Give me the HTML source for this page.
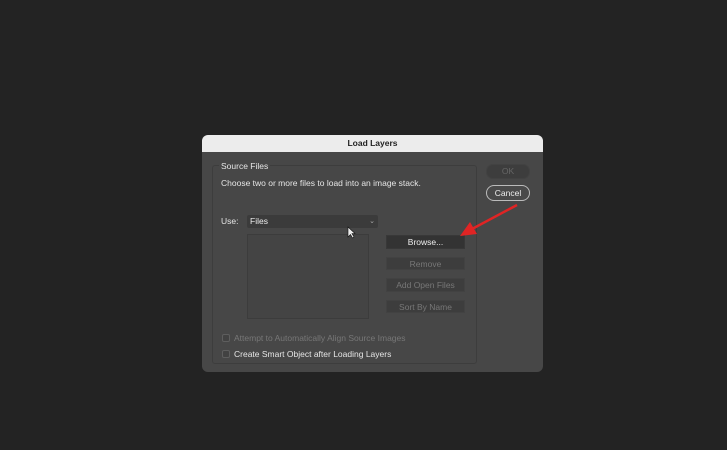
<!DOCTYPE html><html><head><style>
body{margin:0;width:727px;height:450px;background:#232323;position:relative;overflow:hidden;font-family:"Liberation Sans",sans-serif;font-size:8.5px;}
div{position:absolute;box-sizing:border-box}
.dlg{left:202px;top:135px;width:341px;height:237px;background:#474747;border-radius:6px;overflow:hidden}
.tt{left:0;top:0;width:341px;height:17px;background:#ececec;color:#222;font-weight:bold;text-align:center;line-height:17px;font-size:8.5px}
.t{color:#e6e6e6;white-space:nowrap}
.b{background:#3d3d3d;border:1px solid #424242;text-align:center;color:#777;line-height:12px}
.cb{width:8px;height:8px;border:1px solid #5e5e5e;border-radius:2px;background:#424242}
</style></head><body>
<div class="dlg">
<div class="tt">Load Layers</div>
<div style="left:10px;top:30px;width:265px;height:199px;border:1px solid #3d3d3d;border-radius:3px"></div>
<div class="t" style="left:17px;top:26px;background:#474747;padding:0 2px">Source Files</div>
<div class="t" style="left:19px;top:43px">Choose two or more files to load into an image stack.</div>
<div class="t" style="left:19px;top:81px">Use:</div>
<div style="left:45px;top:80px;width:131px;height:13px;background:#3b3b3b;border-radius:2px;color:#eee;padding-left:3px;line-height:13px">Files<span style="position:absolute;right:3px;top:0;color:#aaa;font-size:7px">⌄</span></div>
<div style="left:45px;top:99px;width:122px;height:85px;background:#444;border:1px solid #3c3c3c"></div>
<div class="b" style="left:184px;top:100px;width:79px;height:14px;background:#333;color:#eee;border-color:#383838">Browse...</div>
<div class="b" style="left:184px;top:122px;width:79px;height:13px">Remove</div>
<div class="b" style="left:184px;top:143px;width:79px;height:14px">Add Open Files</div>
<div class="b" style="left:184px;top:165px;width:79px;height:13px">Sort By Name</div>
<div class="cb" style="left:20px;top:199px"></div>
<div class="t" style="left:32px;top:198px;color:#777">Attempt to Automatically Align Source Images</div>
<div class="cb" style="left:20px;top:215px"></div>
<div class="t" style="left:32px;top:214px">Create Smart Object after Loading Layers</div>
<div class="b" style="left:284px;top:29px;width:44px;height:15px;border-radius:7px;line-height:13px;color:#666">OK</div>
<div class="b" style="left:284px;top:50px;width:44px;height:16px;border-radius:8px;border-color:#bbb;background:#4a4a4a;color:#eee;line-height:14px">Cancel</div>
</div>
<svg style="position:absolute;left:0;top:0" width="727" height="450"><line x1="517" y1="205" x2="472" y2="229" stroke="#e02424" stroke-width="2.5"/><polygon points="460,236 470,222 477,234" fill="#e02424"/>
<path d="M348 227 L348 237 L350.5 234.5 L352.5 238 L354 237 L352 233.5 L355 233.5 Z" fill="#eee" stroke="#111" stroke-width="0.6"/></svg>
</body></html>
